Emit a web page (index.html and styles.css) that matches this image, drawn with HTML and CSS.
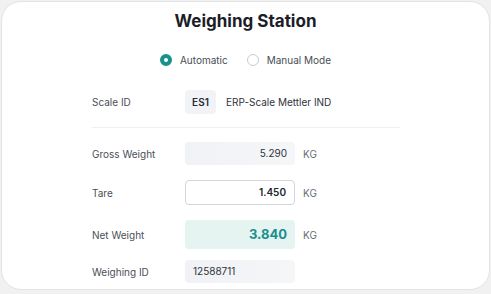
FILE: index.html
```html
<!DOCTYPE html>
<html lang="en">
<head>
    <meta charset="UTF-8">
    <meta name="viewport" content="width=device-width, initial-scale=1.0">
    <title>Weighing Station</title>
    <link rel="stylesheet" href="styles.css">
</head>
<body>
    <div class="card">
        <h1>Weighing Station</h1>

        <div class="modes">
            <label class="mode">
                <span class="radio checked"></span>
                Automatic
            </label>
            <label class="mode">
                <span class="radio"></span>
                Manual Mode
            </label>
        </div>

        <div class="form">
            <div class="row scale-row">
                <span class="label">Scale ID</span>
                <span class="badge">ES1</span>
                <span class="scale-name">ERP-Scale Mettler IND</span>
            </div>

            <div class="divider"></div>

            <div class="row gross-row">
                <span class="label">Gross Weight</span>
                <div class="field readonly">5.290</div>
                <span class="unit">KG</span>
            </div>

            <div class="row tare-row">
                <span class="label">Tare</span>
                <div class="field editable">1.450</div>
                <span class="unit">KG</span>
            </div>

            <div class="row net-row">
                <span class="label">Net Weight</span>
                <div class="field net">3.840</div>
                <span class="unit">KG</span>
            </div>

            <div class="row id-row">
                <span class="label">Weighing ID</span>
                <div class="field readonly left">12588711</div>
            </div>
        </div>
    </div>
</body>
</html>
```

FILE: styles.css
```css
body {
    margin: 0;
    padding: 0;
    background-color: #f1f1f2;
    font-family: 'Inter', 'Noto Sans', sans-serif;
    color: #4a4d55;
}

.card {
    margin: 1px;
    height: 289px;
    background-color: #ffffff;
    border: 1px solid #e3e3e5;
    border-radius: 20px;
    box-sizing: border-box;
}

.card h1 {
    margin: 0;
    padding-top: 7px;
    text-align: center;
    font-size: 17px;
    line-height: 24px;
    font-weight: 700;
    color: #1b1d28;
}

.modes {
    display: flex;
    justify-content: center;
    gap: 19px;
    margin-top: 19px;
    height: 16px;
}

.mode {
    display: flex;
    align-items: center;
    gap: 8px;
    font-size: 10px;
    color: #4a4d55;
}

.radio {
    width: 12px;
    height: 12px;
    border-radius: 50%;
    border: 1px solid #c9cbd0;
    box-sizing: border-box;
    background-color: #ffffff;
}

.radio.checked {
    border: 4px solid #16918e;
    background-color: #ffffff;
}

.form {
    padding-left: 90px;
    width: 308px;
}

.row {
    display: flex;
    align-items: center;
}

.label {
    width: 93px;
    font-size: 10px;
    color: #4b4e56;
}

.scale-row {
    margin-top: 22px;
}

.badge {
    width: 31px;
    height: 24px;
    line-height: 24px;
    text-align: center;
    background-color: #f1f3f6;
    border-radius: 4px;
    font-size: 10px;
    font-weight: 600;
    color: #2a2d36;
}

.scale-name {
    margin-left: 10px;
    font-size: 10px;
    color: #2f323a;
}

.divider {
    margin-top: 13px;
    height: 1px;
    background-color: #eeeff1;
}

.field {
    width: 110px;
    box-sizing: border-box;
    border-radius: 4px;
    text-align: right;
    padding: 0 8px;
    font-size: 10px;
    color: #2f323a;
}

.field.readonly {
    height: 23px;
    line-height: 23px;
    background: linear-gradient(90deg, #f0f2f5, #f4f6f8);
}

.field.left {
    text-align: left;
}

.field.editable {
    height: 25px;
    line-height: 23px;
    border: 1px solid #d4d6da;
    background-color: #ffffff;
    font-weight: 600;
    color: #22252d;
}

.field.net {
    height: 29px;
    line-height: 29px;
    background-color: #e5f3f1;
    font-size: 13px;
    font-weight: 700;
    color: #178f8c;
}

.unit {
    margin-left: 8px;
    font-size: 10px;
    color: #6a6d74;
}

.gross-row {
    margin-top: 14px;
}

.tare-row {
    margin-top: 15px;
}

.net-row {
    margin-top: 15px;
}

.id-row {
    margin-top: 11px;
}
```
